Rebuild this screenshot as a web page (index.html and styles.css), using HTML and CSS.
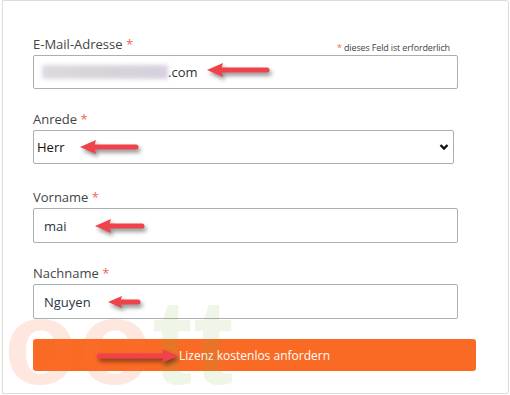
FILE: index.html
```html
<!DOCTYPE html>
<html lang="de">
<head>
    <meta charset="UTF-8">
    <title>Lizenz anfordern</title>
    <link rel="stylesheet" href="styles.css">
</head>
<body>
    <div class="stage">
        <div class="panel">
            <form class="license-form">
                <div class="form-group">
                    <div class="label-row">
                        <label for="email">E-Mail-Adresse <span class="req">*</span></label>
                        <span class="note"><span class="req">*</span> dieses Feld ist erforderlich</span>
                    </div>
                    <div class="field">
                        <input type="text" id="email" class="email-input" value=".com">
                        <span class="blurred"></span>
                    </div>
                </div>

                <div class="form-group group-select">
                    <label for="anrede">Anrede <span class="req">*</span></label>
                    <div class="field select-wrap">
                        <select id="anrede">
                            <option>Herr</option>
                            <option>Frau</option>
                        </select>
                        <svg class="chevron" width="10" height="8" viewBox="0 0 10 8">
                            <path d="M1.5 2 L5 5.5 L8.5 2" fill="none" stroke="#111" stroke-width="2.4"/>
                        </svg>
                    </div>
                </div>

                <div class="form-group">
                    <label for="vorname">Vorname <span class="req">*</span></label>
                    <input type="text" id="vorname" class="tall" value="mai">
                </div>

                <div class="form-group">
                    <label for="nachname">Nachname <span class="req">*</span></label>
                    <input type="text" id="nachname" class="tall" value="Nguyen">
                </div>

                <button type="submit" class="submit-btn">Lizenz kostenlos anfordern</button>
            </form>
        </div>

        <!-- watermark -->
        <div class="watermark"><span class="wm-o">oo</span><span class="wm-t">tt</span></div>

        <!-- annotation arrows -->
        <svg class="arrow arrow-email" width="64" height="20" viewBox="0 0 64 20">
            <path d="M12 10 H61" stroke="#f0424a" stroke-width="5" stroke-linecap="round"/>
            <polygon points="1,10 17,3 15,10 17,17" fill="#f0424a"/>
        </svg>
        <svg class="arrow arrow-herr" width="60" height="20" viewBox="0 0 60 20">
            <path d="M12 10 H57" stroke="#f0424a" stroke-width="5" stroke-linecap="round"/>
            <polygon points="1,10 17,3 15,10 17,17" fill="#f0424a"/>
        </svg>
        <svg class="arrow arrow-mai" width="51" height="20" viewBox="0 0 51 20">
            <path d="M12 10 H48" stroke="#f0424a" stroke-width="5" stroke-linecap="round"/>
            <polygon points="1,10 17,3 15,10 17,17" fill="#f0424a"/>
        </svg>
        <svg class="arrow arrow-name" width="34" height="20" viewBox="0 0 34 20">
            <path d="M10 10 H31" stroke="#f0424a" stroke-width="5" stroke-linecap="round"/>
            <polygon points="1,10 15,4 13,10 15,16" fill="#f0424a"/>
        </svg>
        <svg class="arrow arrow-btn" width="84" height="20" viewBox="0 0 84 20">
            <path d="M3 10 H70" stroke="#f0424a" stroke-width="5" stroke-linecap="round"/>
            <polygon points="82,10 66,3 68,10 66,17" fill="#f0424a"/>
        </svg>
    </div>
</body>
</html>
```

FILE: styles.css
```css
* {
    margin: 0;
    padding: 0;
    box-sizing: border-box;
}

body {
    font-family: "Open Sans", "Noto Sans", sans-serif;
    background: #fff;
}

.stage {
    position: relative;
    width: 510px;
    height: 395px;
    overflow: hidden;
}

.panel {
    margin-left: 2px;
    width: 507px;
    height: 394px;
    border: 1px solid #dcdcdc;
    border-radius: 0 3px 3px 0;
    padding: 33px 0 0 30px;
}

.form-group {
    margin-bottom: 20px;
}

.group-select {
    margin-bottom: 23px;
}

label {
    display: block;
    font-size: 13px;
    line-height: 20px;
    color: #444;
    margin-bottom: 1px;
}

.req {
    color: #ee6a4c;
}

.label-row {
    display: flex;
    justify-content: space-between;
    align-items: flex-end;
    width: 425px;
}

.note {
    font-size: 9px;
    color: #444;
    margin-right: 8px;
    margin-bottom: 1px;
    letter-spacing: -0.15px;
}

.field {
    position: relative;
    width: 425px;
}

input {
    display: block;
    width: 425px;
    height: 34px;
    border: 1px solid #aab0b0;
    border-radius: 2px;
    padding: 0 10px;
    font-family: inherit;
    font-size: 13px;
    color: #2a3547;
    background: transparent;
}

input.tall {
    height: 35px;
}

.email-input {
    padding-left: 134px;
    color: #333;
}

.blurred {
    position: absolute;
    left: 9px;
    top: 10px;
    width: 126px;
    height: 14px;
    background: linear-gradient(90deg, #dcdadf, #d6d3d8 60%, #d8cfe0);
    filter: blur(2px);
}

.select-wrap {
    width: 421px;
}

select {
    display: block;
    width: 421px;
    height: 34px;
    border: 1px solid #aab0b0;
    border-radius: 2px;
    padding: 0 3px;
    font-family: inherit;
    font-size: 13px;
    color: #111;
    background: #fff;
    -webkit-appearance: none;
    appearance: none;
}

.chevron {
    position: absolute;
    right: 5px;
    top: 13px;
}

.submit-btn {
    display: block;
    width: 443px;
    height: 32px;
    border: none;
    border-radius: 3px;
    background: #f96a24;
    color: #fff;
    font-family: inherit;
    font-size: 12px;
}

.watermark {
    position: absolute;
    left: 4px;
    top: 282px;
    font-family: "Liberation Sans", sans-serif;
    font-weight: bold;
    font-size: 120px;
    line-height: 1;
    letter-spacing: 1px;
    pointer-events: none;
}

.wm-o {
    color: rgba(247, 110, 60, 0.17);
}

.wm-t {
    color: rgba(130, 185, 70, 0.13);
}

.arrow {
    position: absolute;
    filter: drop-shadow(2px 3px 2px rgba(0, 0, 0, 0.45));
}

.arrow-email { left: 206px; top: 60px; }
.arrow-herr  { left: 79px;  top: 137px; }
.arrow-mai   { left: 94px;  top: 216px; }
.arrow-name  { left: 107px; top: 292px; }
.arrow-btn   { left: 96px;  top: 346px; }
```
